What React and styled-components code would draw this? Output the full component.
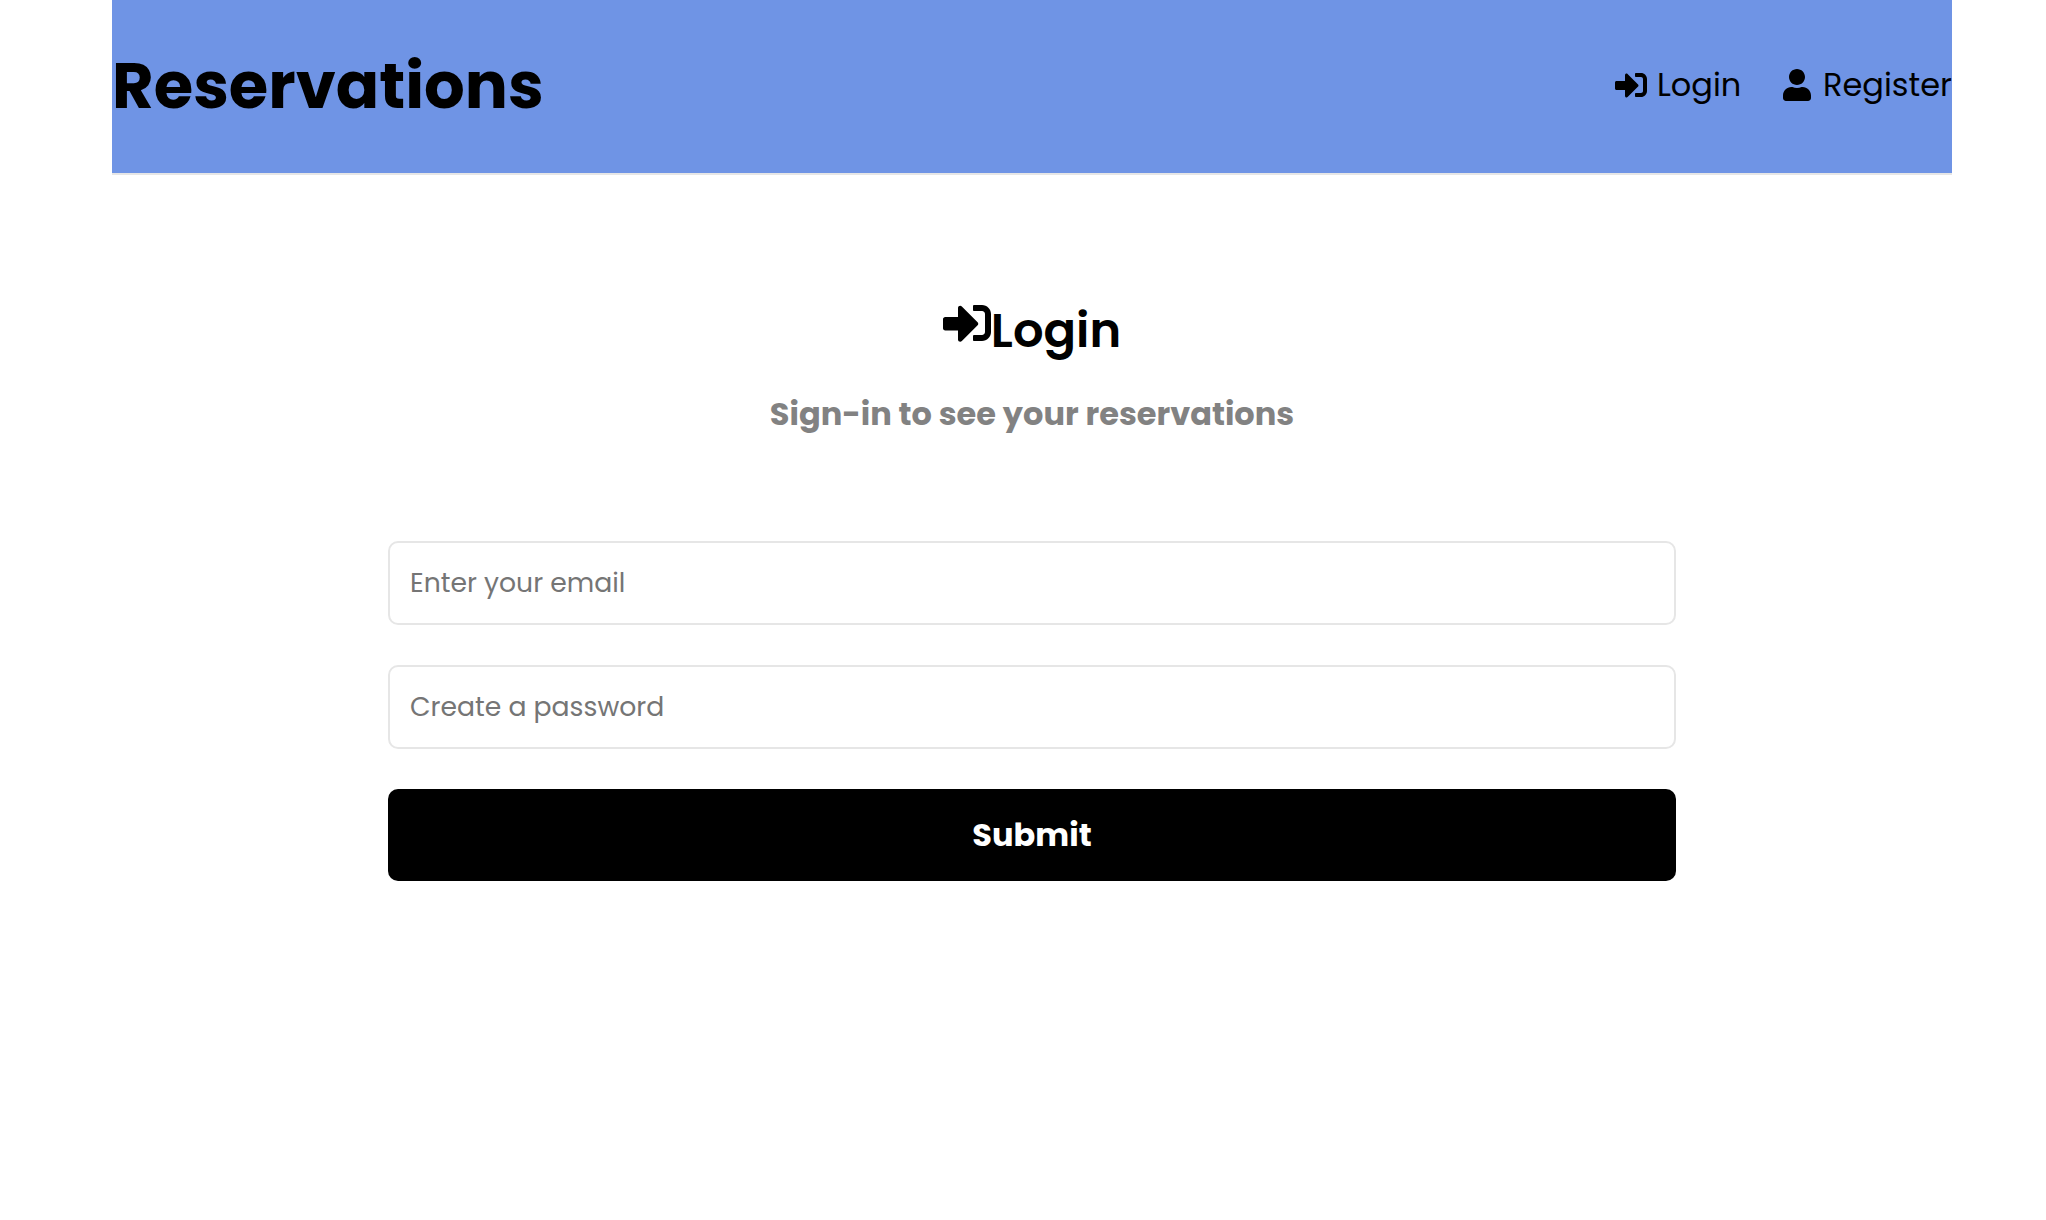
import React from 'react';
import styled, { createGlobalStyle } from 'styled-components';
import { FaSignInAlt, FaUser } from 'react-icons/fa';

const GlobalStyle = createGlobalStyle`
  * { box-sizing: border-box; margin: 0; padding: 0; }
  body {
    background: #fff;
    color: #000;
    font-family: Poppins, Inter, sans-serif;
  }
`;

const Container = styled.div`
  width: 1840px;
  margin-left: 112px;
`;

const Header = styled.header`
  display: flex;
  justify-content: space-between;
  align-items: center;
  height: 175px;
  padding-bottom: 4px;
  border-bottom: 2px solid #e6e6e6;
  background: #6f94e5;
  background-clip: padding-box;
  white-space: nowrap;
`;

const Brand = styled.h1`
  padding-top: 2px;
  font-size: 64px;
  line-height: 96px;
  font-weight: 700;
`;

const Nav = styled.ul`
  display: flex;
  list-style: none;
`;

const NavItem = styled.li`
  width: ${({ $width }) => $width}px;
`;

const NavLink = styled.a`
  display: flex;
  align-items: center;
  gap: 10px;
  font-size: 32px;
  line-height: 48px;

  svg { flex: none; }
`;

const Heading = styled.section`
  display: flex;
  flex-direction: column;
  align-items: center;
  margin-top: 119px;
`;

const Title = styled.h2`
  display: flex;
  align-items: flex-start;
  height: 72px;
  font-size: 48px;
  line-height: 72px;
  font-weight: 600;

  svg { flex: none; margin-top: 5px; }
  span { padding-top: 1px; }
`;

const Subtitle = styled.p`
  margin-top: 24px;
  color: #828282;
  font-size: 32px;
  line-height: 48px;
  font-weight: 700;
`;

const Form = styled.form`
  display: flex;
  flex-direction: column;
  gap: 40px;
  width: 1288px;
  margin: 103px auto 0;
`;

const Field = styled.input`
  height: 84px;
  padding: 0 20px;
  border: 2px solid #e6e6e6;
  border-radius: 10px;
  background: #fff;
  font-family: inherit;
  font-size: 26.66px;

  &::placeholder { color: #757575; opacity: 1; }
`;

const Submit = styled.button`
  height: 92px;
  border: 0;
  border-radius: 10px;
  background: #000;
  color: #fff;
  font-family: inherit;
  font-size: 32px;
  font-weight: 700;
`;

export default function App() {
  return (
    <>
      <GlobalStyle />
      <Container>
        <Header>
          <Brand>Reservations</Brand>
          <Nav>
            <NavItem $width={166}>
              <NavLink><FaSignInAlt />Login</NavLink>
            </NavItem>
            <NavItem $width={171}>
              <NavLink><FaUser />Register</NavLink>
            </NavItem>
          </Nav>
        </Header>
        <Heading>
          <Title><FaSignInAlt /><span>Login</span></Title>
          <Subtitle>Sign-in to see your reservations</Subtitle>
        </Heading>
        <Form>
          <Field type="email" placeholder="Enter your email" />
          <Field type="password" placeholder="Create a password" />
          <Submit type="button">Submit</Submit>
        </Form>
      </Container>
    </>
  );
}
